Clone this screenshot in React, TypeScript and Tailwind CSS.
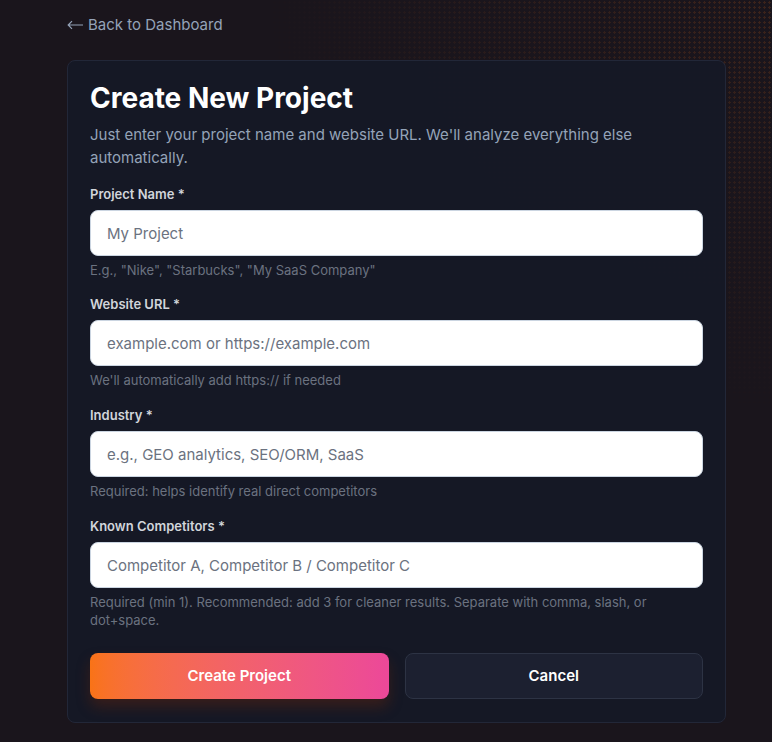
import { useState } from 'react';

const fields = [
  {
    label: 'Project Name *',
    placeholder: 'My Project',
    help: 'E.g., "Nike", "Starbucks", "My SaaS Company"',
  },
  {
    label: 'Website URL *',
    placeholder: 'example.com or https://example.com',
    help: "We'll automatically add https:// if needed",
  },
  {
    label: 'Industry *',
    placeholder: 'e.g., GEO analytics, SEO/ORM, SaaS',
    help: 'Required: helps identify real direct competitors',
  },
  {
    label: 'Known Competitors *',
    placeholder: 'Competitor A, Competitor B / Competitor C',
    help: 'Required (min 1). Recommended: add 3 for cleaner results. Separate with comma, slash, or dot+space.',
  },
];

export default function App() {
  const [values, setValues] = useState<string[]>(['', '', '', '']);

  return (
    <div className="relative min-h-[742px] overflow-hidden bg-[#1a151c] font-['Inter','Noto_Sans',sans-serif]">
      {/* dotted glow, top right */}
      <div className="pointer-events-none absolute right-0 top-0 h-[420px] w-[520px] bg-[radial-gradient(rgba(249,115,22,0.35)_1px,transparent_1.2px)] bg-[length:5px_5px] [mask-image:radial-gradient(ellipse_at_top_right,black_0%,transparent_70%)] opacity-45" />

      <div className="relative pl-[67px] pr-[46px] pt-[15px] pb-5">
        <a href="#" className="flex items-center gap-[5px] text-[15px] leading-5 text-[#94a3b8]">
          <svg width="16" height="10" viewBox="0 0 16 10" fill="none" stroke="#94a3b8" strokeWidth="1.2">
            <path d="M16 5H1.2M5 1.2L1.2 5L5 8.8" />
          </svg>
          Back to Dashboard
        </a>

        <div className="mt-[25px] rounded-lg border border-[#222738] bg-[#151826]/95 px-[22px] pt-[22px] pb-[23px]">
          <h1 className="text-[28px] font-bold leading-[30px] text-white">Create New Project</h1>
          <p className="mt-[10px] text-[15px] leading-[23px] text-[#94a3b8]">
            Just enter your project name and website URL. We'll analyze everything else automatically.
          </p>

          <div className="mt-[15px] flex flex-col">
            {fields.map((f, i) => (
              <div key={f.label} className={i === 0 ? '' : i === 1 ? 'mt-[15px]' : 'mt-[16px]'}>
                <label className="block text-[13px] font-semibold leading-5 text-[#d1d5db]">{f.label}</label>
                <input
                  value={values[i]}
                  onChange={(e) => {
                    const next = [...values];
                    next[i] = e.target.value;
                    setValues(next);
                  }}
                  placeholder={f.placeholder}
                  className="mt-[6px] block h-[46px] w-full rounded-lg border border-[#cbd5e1] bg-white px-4 text-[15px] text-gray-900 outline-none placeholder:text-[#6b7280]"
                />
                <p className="mt-[5px] text-[13px] leading-[18px] text-[#6b7280]">{f.help}</p>
              </div>
            ))}
          </div>

          <div className="mt-[24px] grid grid-cols-2 gap-4">
            <button className="h-[46px] rounded-lg bg-gradient-to-r from-[#f97316] to-[#ec4899] text-[15px] font-semibold text-white shadow-[0_8px_14px_rgba(120,40,10,0.35)]">
              Create Project
            </button>
            <button className="h-[46px] rounded-lg border border-[#2d3344] bg-[#1c2030] text-[15px] font-semibold text-white">
              Cancel
            </button>
          </div>
        </div>
      </div>
    </div>
  );
}
